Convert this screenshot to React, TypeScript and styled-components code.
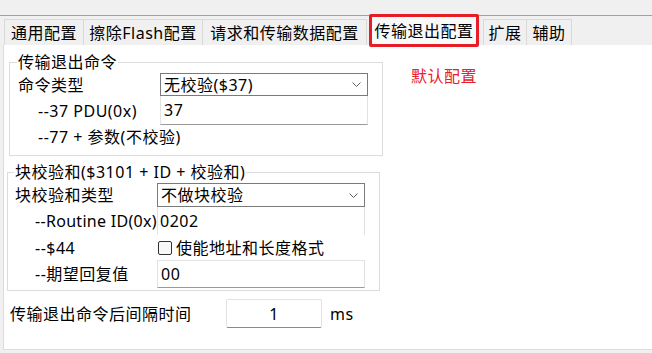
import React from "react";
import styled, { createGlobalStyle } from "styled-components";

const GlobalStyle = createGlobalStyle`
  html, body {
    margin: 0;
    padding: 0;
    background: #f0f0f0;
  }
  body {
    font-family: "Noto Sans", "Noto Sans CJK SC", sans-serif;
    font-size: 16px;
    letter-spacing: 0.5px;
    color: #000;
  }
`;

const Window = styled.div`
  width: 652px;
  height: 353px;
  display: flex;
  flex-direction: column;
  background: #f0f0f0;
  overflow: hidden;
`;

const TopGap = styled.div`
  height: 15px;
  border-bottom: 1px solid #a0a0a0;
`;

const TabStrip = styled.div`
  height: 29px;
  display: flex;
  align-items: flex-end;
  padding-left: 4px;
`;

const Tab = styled.div<{ $w: number }>`
  width: ${(p) => p.$w}px;
  height: 26px;
  box-sizing: border-box;
  display: flex;
  align-items: center;
  justify-content: center;
  border: 1px solid #d9d9d9;
  border-bottom: none;
  background: #f0f0f0;
  line-height: 20px;
  white-space: nowrap;
  & + & {
    margin-left: -1px;
  }
`;

const ActiveTab = styled.div<{ $w: number }>`
  position: relative;
  z-index: 1;
  width: ${(p) => p.$w}px;
  height: 33px;
  box-sizing: border-box;
  margin: 0 4px -2px 2px;
  display: flex;
  align-items: center;
  justify-content: center;
  border: 3px solid #e81c24;
  border-radius: 2px;
  background: #f9f9f9;
  line-height: 20px;
  white-space: nowrap;
`;

const Panel = styled.div`
  flex: 1;
  margin: 0 0 3px 3px;
  padding-top: 7px;
  background: #fff;
  border-left: 1px solid #dcdcdc;
  border-bottom: 1px solid #dcdcdc;
`;

const TopRow = styled.div`
  display: flex;
  align-items: flex-start;
  padding-left: 5px;
`;

const Group = styled.fieldset<{ $w: number; $rows: string; $pad: number }>`
  width: ${(p) => p.$w}px;
  box-sizing: border-box;
  margin: 0;
  padding: 1px 13px ${(p) => p.$pad}px ${(p) => (p.$pad === 6 ? 8 : 7)}px;
  border: 1px solid #dcdcdc;
  display: grid;
  grid-template-columns: 142px 208px;
  grid-template-rows: ${(p) => p.$rows};
`;

const Legend = styled.legend`
  padding: 0 1px;
  margin-left: -1px;
  line-height: 20px;
  white-space: nowrap;
`;

const SecondGroup = styled.div`
  margin: 6px 0 0 3px;
`;

const Label = styled.div<{ $indent?: boolean; $span?: boolean; $tight?: boolean }>`
  display: flex;
  align-items: center;
  padding-left: ${(p) => (p.$indent ? 20 : 0)}px;
  white-space: nowrap;
  line-height: 20px;
  letter-spacing: ${(p) => (p.$tight ? "0.3px" : "0.5px")};
  grid-column: ${(p) => (p.$span ? "1 / span 2" : "auto")};
`;

const Select = styled.div`
  display: flex;
  align-items: center;
  justify-content: space-between;
  box-sizing: border-box;
  border: 1px solid #7a7a7a;
  padding: 0 6px 0 3px;
  background: #fff;
  line-height: 20px;
  white-space: nowrap;
`;

const Field = styled.input<{ $noTop?: boolean; $noBottom?: boolean; $pl?: number }>`
  box-sizing: border-box;
  width: 100%;
  height: 100%;
  min-width: 0;
  margin: 0;
  padding: 0 3px 0 ${(p) => p.$pl ?? 3}px;
  font: inherit;
  letter-spacing: inherit;
  color: #000;
  background: #fff;
  border: 1px solid #e2e2e2;
  border-top: ${(p) => (p.$noTop ? "none" : "1px solid #e2e2e2")};
  border-bottom: ${(p) => (p.$noBottom ? "none" : "1px solid #9a9a9a")};
  outline: none;
`;

const CheckRow = styled.label`
  display: flex;
  align-items: center;
  gap: 4px;
  white-space: nowrap;
  line-height: 20px;
`;

const CheckBox = styled.span`
  width: 12px;
  height: 12px;
  border: 1px solid #333;
  border-radius: 2px;
  background: #f8f8f8;
  margin-left: 1px;
`;

const Note = styled.div`
  margin: 14px 0 0 28px;
  color: #e8202a;
  line-height: 20px;
`;

const IntervalRow = styled.div`
  display: flex;
  align-items: center;
  height: 29px;
  margin-top: 8px;
  padding-left: 6px;
`;

const IntervalLabel = styled.div`
  width: 216px;
  line-height: 20px;
  white-space: nowrap;
`;

const IntervalField = styled(Field)`
  width: 96px;
  flex: none;
  text-align: center;
  border-radius: 2px;
  border-bottom-color: #8a8a8a;
`;

const Unit = styled.div`
  margin-left: 8px;
  line-height: 20px;
`;

const Chevron = () => (
  <svg width="9" height="5" viewBox="0 0 9 5">
    <path d="M0.5 0.5 L4.5 4.5 L8.5 0.5" fill="none" stroke="#606060" strokeWidth="1" />
  </svg>
);

const tabs = [
  { name: "通用配置", w: 80 },
  { name: "擦除Flash配置", w: 120 },
  { name: "请求和传输数据配置", w: 165 },
];

export default function App() {
  return (
    <Window>
      <GlobalStyle />
      <TopGap />
      <TabStrip>
        {tabs.map((t) => (
          <Tab key={t.name} $w={t.w}>{t.name}</Tab>
        ))}
        <ActiveTab $w={110}>传输退出配置</ActiveTab>
        <Tab $w={44}>扩展</Tab>
        <Tab $w={46}>辅助</Tab>
      </TabStrip>
      <Panel>
        <TopRow>
          <Group $w={374} $rows="23px 29px 24px" $pad={6}>
            <Legend>传输退出命令</Legend>
            <Label>命令类型</Label>
            <Select>
              <span>无校验($37)</span>
              <Chevron />
            </Select>
            <Label $indent>--37 PDU(0x)</Label>
            <Field $noTop defaultValue="37" readOnly />
            <Label $indent $span>--77 + 参数(不校验)</Label>
          </Group>
          <Note>默认配置</Note>
        </TopRow>
        <SecondGroup>
          <Group $w={373} $rows="24px 28px 25px 28px" $pad={2}>
            <Legend>块校验和($3101 + ID + 校验和)</Legend>
            <Label>块校验和类型</Label>
            <Select>
              <span>不做块校验</span>
              <Chevron />
            </Select>
            <Label $indent $tight>--Routine ID(0x)</Label>
            <Field $noTop $noBottom $pl={2} defaultValue="0202" readOnly />
            <Label $indent>--$44</Label>
            <CheckRow>
              <CheckBox />
              使能地址和长度格式
            </CheckRow>
            <Label $indent>--期望回复值</Label>
            <Field defaultValue="00" readOnly />
          </Group>
        </SecondGroup>
        <IntervalRow>
          <IntervalLabel>传输退出命令后间隔时间</IntervalLabel>
          <IntervalField defaultValue="1" readOnly />
          <Unit>ms</Unit>
        </IntervalRow>
      </Panel>
    </Window>
  );
}
